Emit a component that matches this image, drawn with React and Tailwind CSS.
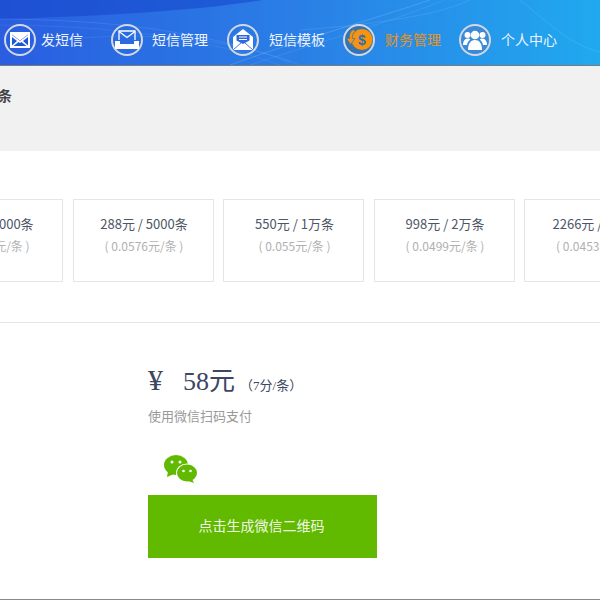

const cjk = "font-['Noto_Sans_CJK_SC','Noto_Sans',sans-serif]";

function Ring({ children, bg = '' }) {
  return (
    <span className={`w-[32px] h-[32px] shrink-0 rounded-full border-2 border-[#d3d8e2] flex items-center justify-center ${bg}`}>
      {children}
    </span>
  );
}

const icons = {
  send: (
    <svg width="20" height="16" viewBox="0 0 20 16">
      <rect x="0" y="0" width="20" height="16" fill="#fff" />
      <path d="M2 2.500l8 6 8-6V3l-8 6-8-6zM2 5l5 4-5 4.500zM18 5l-5 4 5 4.500zM3.500 14l5-4 1.500 1 1.500-1 5 4z" fill="#1f55d8" />
    </svg>
  ),
  box: (
    <svg width="24" height="19" viewBox="0 0 24 19">
      <path d="M4 10V1h16v9" fill="none" stroke="#fff" strokeWidth="1.300" />
      <path d="M4 1.500l8 6 8-6" fill="none" stroke="#fff" strokeWidth="1.300" />
      <path d="M0 11h5v3h14v-3h5v8H0z" fill="#fff" />
    </svg>
  ),
  open: (
    <svg width="20" height="21" viewBox="0 0 20 21">
      <path d="M0 8l10-8 10 8v13H0z" fill="#fff" />
      <path d="M3.500 6h13v5.500L10 15l-6.500-3.500z" fill="#2f68dc" />
      <path d="M6 8h8M6 10.500h8" stroke="#fff" strokeWidth="1" />
      <path d="M0 21l8-7M20 21l-8-7" stroke="#2f68dc" strokeWidth="0.900" />
    </svg>
  ),
  money: (
    <svg width="27" height="23" viewBox="0 0 27 23" className="shrink-0">
      <circle cx="16" cy="11.500" r="10.500" fill="#f7930e" />
      <path d="M7 1.500C3.500 4.500 3 7.500 3.500 10.500H0.500l4 6 4.500-6H6.300C6 7.500 7 5 9.500 3z" fill="#f7930e" stroke="#3574b4" strokeWidth="0.700" />
      <text x="16" y="16.500" textAnchor="middle" fontSize="14" fontWeight="700" fill="#2f6fb0" fontFamily="Liberation Sans">$</text>
    </svg>
  ),
  people: (
    <svg width="24" height="20" viewBox="0 0 24 20">
      <circle cx="12" cy="5" r="4.300" fill="#fff" />
      <circle cx="4.500" cy="5" r="3" fill="#fff" />
      <circle cx="19.500" cy="5" r="3" fill="#fff" />
      <path d="M5 20c0-7 3-10 7-10s7 3 7 10z" fill="#fff" />
      <path d="M0 15c0-4 2-6.500 4.800-6.500 1 0 2 .4 2.500 1-2 1.800-3 3.300-3.300 5.500zM24 15c0-4-2-6.500-4.800-6.500-1 0-2 .4-2.500 1 2 1.800 3 3.300 3.300 5.500z" fill="#fff" />
    </svg>
  ),
};

const nav = [
  { icon: 'send', label: '发短信', gap: 'gap-[5px]', w: 'w-[107px]' },
  { icon: 'box', label: '短信管理', gap: 'gap-[9px]', w: 'w-[116px]' },
  { icon: 'open', label: '短信模板', gap: 'gap-[10px]', w: 'w-[116px]' },
  { icon: 'money', label: '财务管理', gap: 'gap-[10px]', w: 'w-[116px]', active: true, bg: 'bg-[#3574b4]' },
  { icon: 'people', label: '个人中心', gap: 'gap-[10px]', w: 'w-[116px]', bg: 'bg-[#3a8ad8]' },
];

const cards = [
  ['58元 / 1000条', '( 0.058元/条 )'],
  ['288元 / 5000条', '( 0.0576元/条 )'],
  ['550元 / 1万条', '( 0.055元/条 )'],
  ['998元 / 2万条', '( 0.0499元/条 )'],
  ['2266元 / 5万条', '( 0.0453元/条 )'],
];

function Waves() {
  return (
    <svg className="absolute inset-0" width="600" height="65" viewBox="0 0 600 65" fill="none">
      <path d="M0 0H262C200 10 110 16 0 19z" fill="#1748cc" opacity="0.6" />
      <path d="M0 19C110 20 200 30 290 62" stroke="#9cc8ff" strokeWidth="1" opacity="0.16" />
      <path d="M0 25C110 26 200 36 280 65" stroke="#9cc8ff" strokeWidth="1" opacity="0.12" />
      <path d="M60 40C150 30 240 40 300 65" stroke="#9cc8ff" strokeWidth="1" opacity="0.12" />
      <path d="M230 65C300 40 370 20 430 0" stroke="#b8dcff" strokeWidth="1" opacity="0.22" />
      <path d="M250 65C320 42 390 22 445 0" stroke="#b8dcff" strokeWidth="1" opacity="0.12" />
      <path d="M300 30C370 25 440 15 470 0" stroke="#b8dcff" strokeWidth="1" opacity="0.14" />
      <path d="M520 0C545 20 570 45 600 52" stroke="#b8dcff" strokeWidth="1" opacity="0.16" />
    </svg>
  );
}

export default function App() {
  return (
    <div className={`w-[600px] h-[600px] overflow-hidden bg-white flex flex-col ${cjk}`}>
      <header className="relative h-[66px] shrink-0 border-b border-[#7a7a7a] bg-gradient-to-r from-[#2a5de0] via-[#2a7fe6] to-[#20a9ee] overflow-hidden">
        <Waves />
        <nav className="relative flex items-center h-full pl-[4px] pt-[14px]">
          {nav.map((n) => (
            <div key={n.label} className={`flex items-center shrink-0 ${n.gap} ${n.w}`}>
              <Ring bg={n.bg}>{icons[n.icon]}</Ring>
              <span className={`text-[14px] whitespace-nowrap ${n.active ? 'text-[#e8921a]' : 'text-[#eef3ff]'}`}>{n.label}</span>
            </div>
          ))}
        </nav>
      </header>

      <section className="h-[85px] shrink-0 bg-[#f1f1f1] pt-[21px]">
        <p className="ml-[-79px] w-[92px] whitespace-nowrap text-[14px] leading-[20px] font-bold text-[#444] font-['Liberation_Serif','Noto_Sans_CJK_SC',serif]">
          剩余短信：0条
        </p>
      </section>

      <section className="h-[172px] shrink-0 border-b border-[#e5e5e5] pt-[48px]">
        <div className="flex gap-[9.5px] ml-[-78px] w-[760px]">
          {cards.map(([a, b]) => (
            <div key={a} className="w-[141px] h-[83px] shrink-0 border border-[#e5e5e5] text-center pt-[14px] pl-[2px]">
              <div className="text-[13px] leading-[20px] text-[#4d5566] whitespace-nowrap">{a}</div>
              <div className="text-[12px] leading-[20px] mt-[2px] text-[#b0b0b0] whitespace-nowrap">{b}</div>
            </div>
          ))}
        </div>
      </section>

      <section className="flex-1 border-b border-[#888] pl-[148px] pt-[40px]">
        <div className="flex items-baseline text-[#3d4663] font-['Liberation_Serif','Noto_Sans_CJK_SC',serif] h-[34px]">
          <span className="text-[30px] leading-[34px] w-[35px]">¥</span>
          <span className="text-[26px] leading-[34px]">58元</span>
          <span className="text-[13px] ml-[5px]">（7分/条）</span>
        </div>
        <p className="mt-[9px] text-[13px] leading-[20px] text-[#999]">使用微信扫码支付</p>
        <svg className="ml-[16px] mt-[28px] block" width="34" height="29" viewBox="0 0 34 29">
          <ellipse cx="12" cy="11" rx="12" ry="10" fill="#61b900" />
          <path d="M4 17l-1 6 7-3z" fill="#61b900" />
          <circle cx="8" cy="8" r="1.500" fill="#fff" />
          <circle cx="16" cy="8" r="1.500" fill="#fff" />
          <ellipse cx="23" cy="19" rx="11" ry="9.500" fill="#fff" />
          <ellipse cx="23" cy="19" rx="10" ry="8.500" fill="#61b900" />
          <path d="M28 25l2 4-6-2z" fill="#61b900" />
          <circle cx="19.500" cy="17" r="1.300" fill="#fff" />
          <circle cx="26.500" cy="17" r="1.300" fill="#fff" />
        </svg>
        <button className="block mt-[12px] w-[229px] h-[63px] pb-[3px] pr-[2px] bg-[#61b900] text-[#eef8e0] text-[14px]">点击生成微信二维码</button>
      </section>
    </div>
  );
}
